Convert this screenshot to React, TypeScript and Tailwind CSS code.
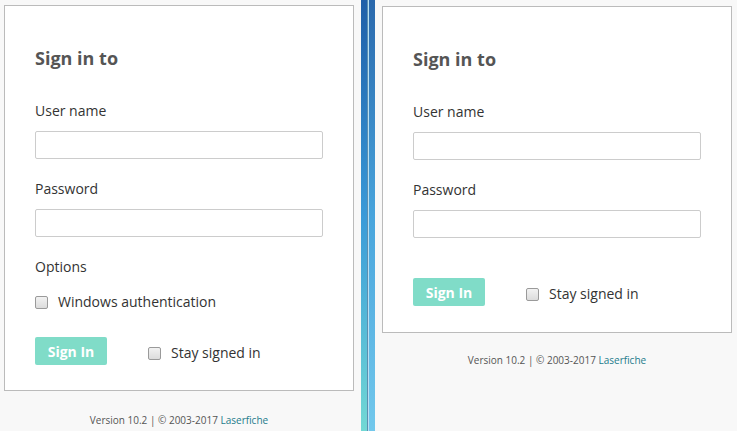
import React from "react";

function Check({ label }: { label: string }) {
  return (
    <div className="flex items-center">
      <span className="w-[13px] h-[13px] rounded-[2px] border border-[#9a9a9a] bg-gradient-to-b from-[#f2f2f2] to-[#dcdcdc]" />
      <span className="ml-[10px] text-[14px] text-[#333] leading-[20px]">{label}</span>
    </div>
  );
}

function Field({ label, first }: { label: string; first?: boolean }) {
  return (
    <div className={first ? "" : "mt-[20px]"}>
      <div className="text-[14px] leading-[20px] text-[#333]">{label}</div>
      <div className="mt-[10px] h-[28px] w-[288px] rounded-[2px] border border-[#cccccc] bg-white" />
    </div>
  );
}

function Footer() {
  return (
    <div className="text-center text-[10px] text-[#555] leading-[14px]">
      Version 10.2 | © 2003-2017 <span className="text-[#1d7b8c]">Laserfiche</span>
    </div>
  );
}

function SignInBtn() {
  return (
    <div className="w-[72px] h-[28px] rounded-[2px] bg-[#80dcc8] flex items-center justify-center text-white font-bold text-[14px]">
      Sign In
    </div>
  );
}

export default function App() {
  return (
    <div
      className="w-[737px] h-[431px] bg-[#f8f8f8] flex overflow-hidden"
      style={{ fontFamily: '"Open Sans", "Noto Sans", sans-serif' }}
    >
      {/* Left */}
      <div className="w-[361px] shrink-0 pl-[4px] pt-[5px] flex flex-col">
        <div className="w-[350px] h-[386px] border border-[#bbbbbb] bg-white pl-[30px] pt-[38px]">
          <div className="text-[18px] font-bold text-[#555] leading-[28px]">Sign in to</div>
          <div className="mt-[29px]">
            <Field label="User name" first />
            <Field label="Password" />
          </div>
          <div className="mt-[20px] text-[14px] leading-[20px] text-[#333]">Options</div>
          <div className="mt-[15px]">
            <Check label="Windows authentication" />
          </div>
          <div className="mt-[25px] flex items-center">
            <SignInBtn />
            <div className="ml-[41px] mt-[4px]">
              <Check label="Stay signed in" />
            </div>
          </div>
        </div>
        <div className="w-[350px] mt-[22px]">
          <Footer />
        </div>
      </div>

      {/* Divider */}
      <div className="w-[14px] shrink-0 h-full flex">
        <div className="w-[7px] h-full bg-gradient-to-b from-[#1f5fa8] via-[#3a9ad8] to-[#72d8d4] border-r border-[#5c8fb0]" />
        <div className="w-[7px] h-full bg-gradient-to-b from-[#2a68ac] via-[#48a4dc] to-[#72c8ec] border-l border-[#b8e0f4]" />
      </div>

      {/* Right */}
      <div className="flex-1 pl-[7px] pt-[6px] flex flex-col">
        <div className="w-[350px] h-[327px] border border-[#bbbbbb] bg-white pl-[30px] pt-[38px]">
          <div className="text-[18px] font-bold text-[#555] leading-[28px]">Sign in to</div>
          <div className="mt-[29px]">
            <Field label="User name" first />
            <Field label="Password" />
          </div>
          <div className="mt-[40px] flex items-center">
            <SignInBtn />
            <div className="ml-[41px] mt-[4px]">
              <Check label="Stay signed in" />
            </div>
          </div>
        </div>
        <div className="w-[350px] mt-[20px]">
          <Footer />
        </div>
      </div>
    </div>
  );
}
